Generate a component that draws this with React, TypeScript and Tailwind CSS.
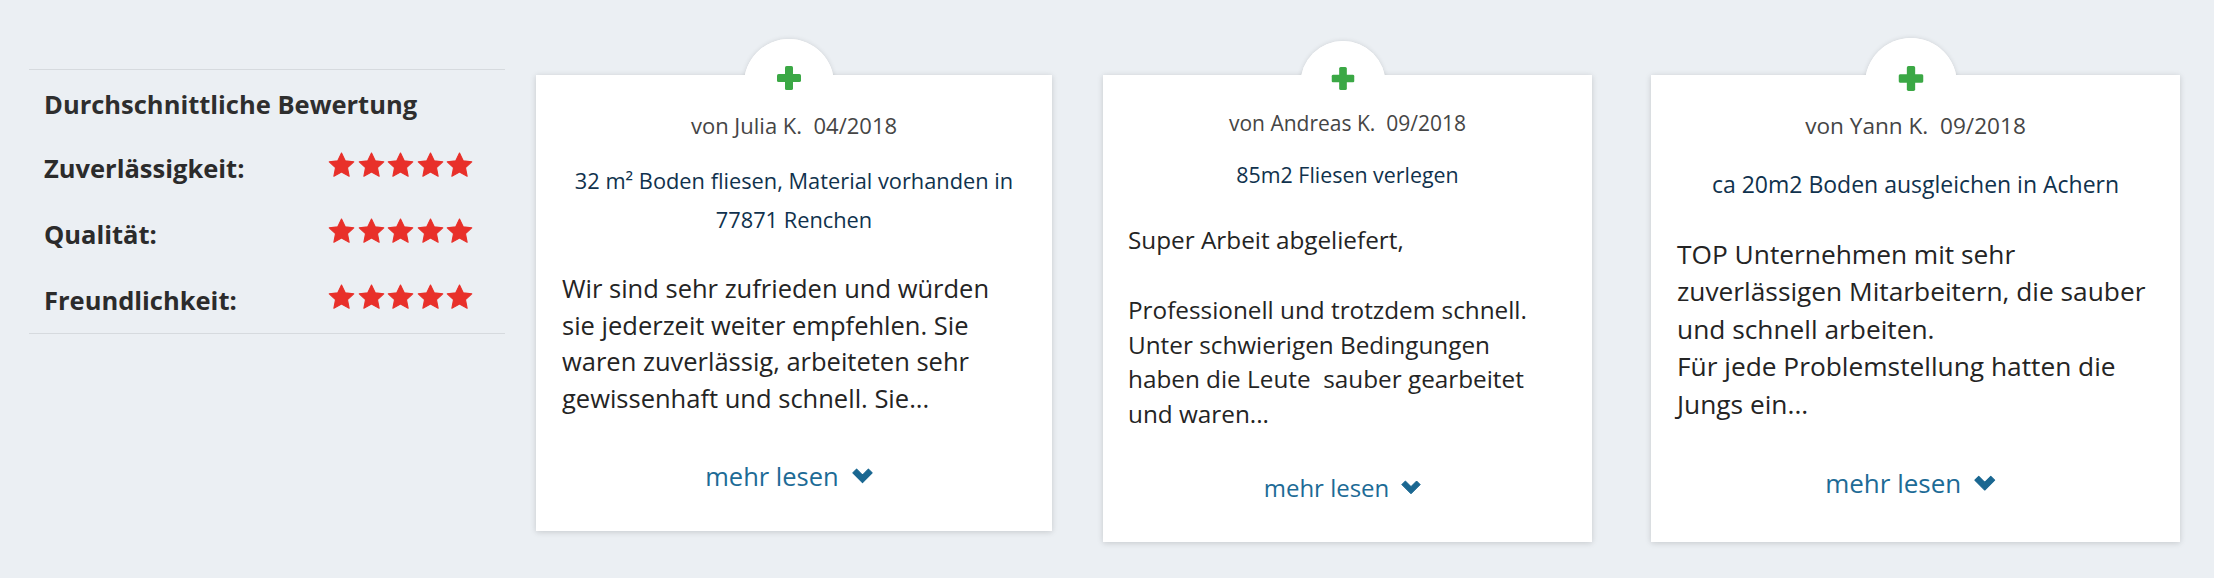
import React from 'react'

type Review = {
  author: string
  title: string
  text: string
  s: {
    wrap: string
    circle: string
    plus: string
    pad: string
    von: string
    sub: string
    body: string
    more: string
    chevron: string
  }
}

const reviews: Review[] = [
  {
    author: 'von Julia K.  04/2018',
    title: '32 m² Boden fliesen, Material vorhanden in\n77871 Renchen',
    text: 'Wir sind sehr zufrieden und würden\nsie jederzeit weiter empfehlen. Sie\nwaren zuverlässig, arbeiteten sehr\ngewissenhaft und schnell. Sie...',
    s: {
      wrap: 'w-[516px] ml-[31px]',
      circle: 'w-[90px] h-[90px] -top-[36px]',
      plus: '-top-[9px] w-[24px] h-[24px]',
      pad: 'pt-[35px] pb-[37px]',
      von: 'text-[22px] leading-[30px]',
      sub: 'mt-[21px] text-[21.8px] leading-[39px]',
      body: 'mt-[31px] text-[25.5px] leading-[36.6px] px-[26px]',
      more: 'mt-[42px] text-[25.5px] leading-[36px] gap-[13px]',
      chevron: 'w-[21px] h-[16px]',
    },
  },
  {
    author: 'von Andreas K.  09/2018',
    title: '85m2 Fliesen verlegen',
    text: 'Super Arbeit abgeliefert,\n\nProfessionell und trotzdem schnell.\nUnter schwierigen Bedingungen\nhaben die Leute  sauber gearbeitet\nund waren...',
    s: {
      wrap: 'w-[489px] ml-[51px]',
      circle: 'w-[85px] h-[85px] -top-[34px]',
      plus: '-top-[8.5px] w-[23px] h-[23px]',
      pad: 'pt-[34px] pb-[37px]',
      von: 'text-[21px] leading-[28.4px]',
      sub: 'mt-[19px] text-[21.4px] leading-[37px]',
      body: 'mt-[30px] text-[24.3px] leading-[34.7px] px-[25px]',
      more: 'mt-[39px] text-[24px] leading-[34px] gap-[12px]',
      chevron: 'w-[20px] h-[15px]',
    },
  },
  {
    author: 'von Yann K.  09/2018',
    title: 'ca 20m2 Boden ausgleichen in Achern',
    text: 'TOP Unternehmen mit sehr\nzuverlässigen Mitarbeitern, die sauber\nund schnell arbeiten.\nFür jede Problemstellung hatten die\nJungs ein...',
    s: {
      wrap: 'w-[529px] ml-[59px]',
      circle: 'w-[92px] h-[92px] -top-[37px]',
      plus: '-top-[9.5px] w-[25px] h-[25px]',
      pad: 'pt-[36px] pb-[40px]',
      von: 'text-[22.6px] leading-[30.7px]',
      sub: 'mt-[22px] text-[23px] leading-[40px]',
      body: 'mt-[32px] text-[26.3px] leading-[37.5px] px-[26px]',
      more: 'mt-[42px] text-[26px] leading-[37px] gap-[13px]',
      chevron: 'w-[21.5px] h-[16.5px]',
    },
  },
]

const ratings = ['Zuverlässigkeit:', 'Qualität:', 'Freundlichkeit:']

function Star() {
  return (
    <svg viewBox="0 0 24 23" className="w-[27px] h-[26px]">
      <path
        d="M12 0.8l3.3 7 7.6 0.9-5.6 5.2 1.5 7.6L12 17.7l-6.8 3.8 1.5-7.6L1.1 8.7l7.6-0.9z"
        fill="#e8302a"
        stroke="#e8302a"
        strokeWidth="1"
        strokeLinejoin="round"
      />
    </svg>
  )
}

function Plus({ className }: { className: string }) {
  return (
    <svg viewBox="0 0 24 24" className={className}>
      <rect x="8" y="0" width="8" height="24" rx="1.6" fill="#3ba845" />
      <rect x="0" y="8" width="24" height="8" rx="1.6" fill="#3ba845" />
    </svg>
  )
}

function Chevron({ className }: { className: string }) {
  return (
    <svg viewBox="0 0 20 15" className={className}>
      <path d="M0.8 4.6L4.4 1l5.6 5.6L15.6 1l3.6 3.6L10 13.8z" fill="#1a6791" strokeLinejoin="round" stroke="#1a6791" strokeWidth="1" />
    </svg>
  )
}

function ReviewCard({ review }: { review: Review }) {
  const s = review.s
  return (
    <div className={`relative mt-[6px] shrink-0 ${s.wrap}`}>
      {/* bump behind the card, with soft edge */}
      <div className={`absolute left-[calc(50%-5px)] -translate-x-1/2 rounded-full bg-white shadow-[0_0_5px_rgba(0,0,0,0.12)] ${s.circle}`}></div>

      <div className={`relative bg-white shadow-[0_1px_6px_rgba(0,0,0,0.16)] flex flex-col ${s.pad}`}>
        <p className={`text-center text-[#454545] whitespace-pre-wrap ${s.von}`}>{review.author}</p>
        <p className={`text-center text-[#10324d] whitespace-pre-wrap ${s.sub}`}>{review.title}</p>
        <p className={`text-[#242424] whitespace-pre-wrap ${s.body}`}>{review.text}</p>
        <div className={`flex items-center justify-center pr-[10px] text-[#1d6b96] ${s.more}`}>
          <span>mehr lesen</span>
          <Chevron className={s.chevron} />
        </div>
      </div>

      {/* top of the bump, covers the card's top shadow */}
      <div className={`absolute left-[calc(50%-5px)] -translate-x-1/2 rounded-full bg-white ${s.circle} [clip-path:inset(0_0_50%_0)]`}></div>
      <Plus className={`absolute left-[calc(50%-5px)] -translate-x-1/2 ${s.plus}`} />
    </div>
  )
}

export default function App() {
  return (
    <div className="min-h-screen h-[578px] bg-[#ebeff3] font-['Open_Sans',sans-serif] overflow-hidden">
      <div className="flex items-start pt-[69px] pl-[29px]">
        {/* Rating summary */}
        <div className="w-[476px] shrink-0 border-t border-b border-[#d6dade] pt-[16px]">
          <h3 className="pl-[15px] text-[25.5px] leading-[36px] font-bold text-[#2e2e2e]">Durchschnittliche Bewertung</h3>
          <div className="mt-[13px]">
            {ratings.map((r) => (
              <div key={r} className="flex items-center justify-between h-[66px] pl-[15px] pr-[32px]">
                <span className="text-[25.5px] font-bold text-[#2b2b2b]">{r}</span>
                <div className="flex gap-[2.5px] mb-[6px]">
                  {[0, 1, 2, 3, 4].map((i) => (
                    <Star key={i} />
                  ))}
                </div>
              </div>
            ))}
          </div>
        </div>

        {reviews.map((review, idx) => (
          <ReviewCard key={idx} review={review} />
        ))}
      </div>
    </div>
  )
}
